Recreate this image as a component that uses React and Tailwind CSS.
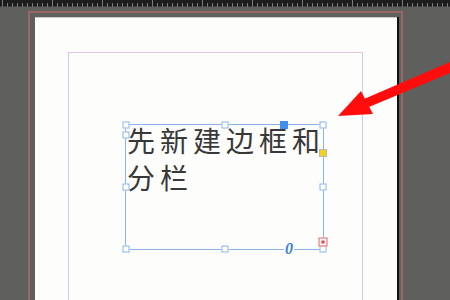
import React from "react";

const Handle = ({ className }) => (
  <span
    className={`absolute w-[7px] h-[7px] bg-white border border-[#8ab4e8] -translate-x-1/2 -translate-y-1/2 ${className}`}
  />
);

const Ruler = () => {
  const ticks = Array.from({ length: 90 }, (_, i) => i * 5 + 2);
  return (
    <div className="h-[7px] bg-[#1c1c1c] border-b border-[#3a3a3a]">
      <svg width="450" height="7" className="block">
        {ticks.map((x, i) => (
          <line
            key={x}
            x1={x + 0.5}
            x2={x + 0.5}
            y1={i % 10 === 0 ? 0 : 3}
            y2="7"
            stroke="#7a7a7a"
            strokeWidth="1"
          />
        ))}
      </svg>
    </div>
  );
};

const Arrow = () => (
  <svg
    width="450"
    height="300"
    className="absolute inset-0 pointer-events-none"
  >
    <polygon points="450,62 450,73 369,107 364,99" fill="#ff0d0d" />
    <polygon points="338,116 361,91 373,114" fill="#ff0d0d" />
  </svg>
);

export default function App() {
  return (
    <div
      className="relative w-[450px] h-[300px] overflow-hidden bg-[#5f5f5d]"
      style={{ fontFamily: '"Noto Sans CJK SC", "Noto Sans", sans-serif' }}
    >
      <Ruler />
      {/* bleed frame */}
      <div className="ml-[28px] mt-[4px] w-[375px] h-[300px] border-2 border-[#9a6862] pl-[5px] pt-[4px] pr-[2px] flex">
        <div className="flex-1 bg-[#fdfdfb] border-t border-[#c9c9c9] pt-[34px] pl-[33px] pr-[34px] flex">
          {/* margin guide */}
          <div className="flex-1 border-t border-[#dfc8df] border-x border-x-[#c7cde8] pl-[56px] pt-[71px]">
            {/* text frame */}
            <div className="relative w-[199px] h-[126px] border border-[#8ab4e8]">
              <div className="pl-[1px] -mt-[3px] text-[28px] leading-[37px] tracking-[5px] text-[#383838] font-normal whitespace-nowrap">
                先新建边框和
                <br />
                分栏
              </div>
              <Handle className="left-0 top-0" />
              <Handle className="left-0 top-[10px]" />
              <Handle className="left-1/2 top-0" />
              <Handle className="left-full top-0" />
              <Handle className="left-0 top-1/2" />
              <Handle className="left-full top-1/2" />
              <Handle className="left-0 top-full" />
              <Handle className="left-1/2 top-full" />
              <Handle className="left-full top-full" />
              <span className="absolute left-[158px] top-0 w-[8px] h-[8px] bg-[#3f8ef0] -translate-x-1/2 -translate-y-1/2" />
              <span className="absolute left-full top-[28px] w-[8px] h-[8px] bg-[#f2d21c] border border-[#b8b8b8] -translate-x-1/2 -translate-y-1/2" />
              <span className="absolute left-full top-[117px] w-[9px] h-[9px] bg-[#fff4f4] border border-[#e56a6a] -translate-x-1/2 -translate-y-1/2 flex items-center justify-center">
                <span className="w-[3px] h-[3px] bg-[#e04a4a]" />
              </span>
              <span
                className="absolute left-[163px] top-full -translate-x-1/2 -translate-y-1/2 bg-[#fdfdfb] px-[1px] text-[16px] leading-none italic font-bold text-[#3b82d8]"
                style={{ fontFamily: '"Liberation Serif", serif' }}
              >
                0
              </span>
            </div>
          </div>
        </div>
        <div className="w-[2px] bg-[#111]" />
      </div>
      <Arrow />
    </div>
  );
}
